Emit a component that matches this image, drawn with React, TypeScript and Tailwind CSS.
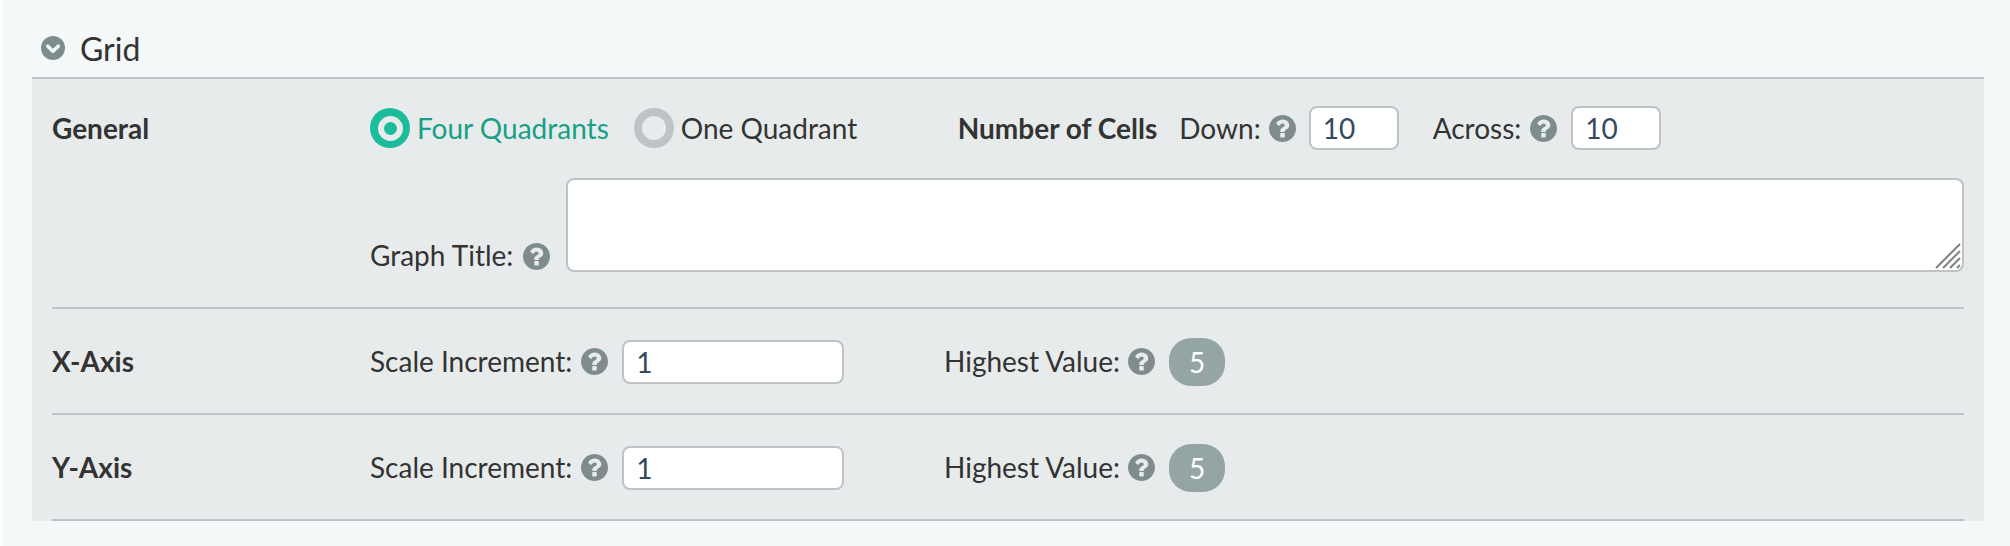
function Help() {
  return (
    <svg className="w-[27px] h-[27px] shrink-0 text-[#7f8c8d]" viewBox="128 128 1536 1536" fill="currentColor">
      <path d="M1024 1376v-192q0-14-9-23t-23-9h-192q-14 0-23 9t-9 23v192q0 14 9 23t23 9h192q14 0 23-9t9-23zm256-672q0-88-55.5-163t-138.5-116-170-41q-243 0-371 213-15 24 8 42l132 100q7 6 19 6 16 0 25-12 53-68 86-92 34-24 86-24 48 0 85.5 26t37.5 59q0 38-20 61t-68 45q-63 28-115.5 86.5t-52.5 125.5v36q0 14 9 23t23 9h192q14 0 23-9t9-23q0-19 21.5-49.5t54.5-49.5q32-18 49-28.5t46-35 44.5-48 28-60.5 12.5-81zm384 192q0 209-103 385.5t-279.5 279.5-385.5 103-385.5-103-279.5-279.5-103-385.5 103-385.5 279.5-279.5 385.5-103 385.5 103 279.5 279.5 103 385.5z" />
    </svg>
  );
}

function ChevronCircle() {
  return (
    <svg className="ml-[9px] w-[24px] h-[24px]" viewBox="0 0 24 24" fill="none">
      <circle cx="12" cy="12" r="12" fill="#7f8c8d" />
      <path d="M6.8 10.2 L12 15.2 L17.2 10.2" stroke="#f4f8f9" strokeWidth="3.6" strokeLinecap="round" strokeLinejoin="round" />
    </svg>
  );
}

function NumberInput({ value, width }: { value: string; width: string }) {
  return (
    <input
      type="text"
      defaultValue={value}
      className={`${width} h-[44px] rounded-[8px] border-2 border-[#bdc3c7] bg-white px-[12px] text-[28px] text-[#34495e] outline-none`}
    />
  );
}

function AxisRow({ label }: { label: string }) {
  return (
    <div className="flex items-center h-[106px] pt-[1px] border-b-2 border-[#bdc3c7]">
      <div className="w-[318px] mb-[2px] font-bold">{label}</div>
      <div className="flex items-center w-[574px]">
        <span className="mb-[2px]">Scale Increment:</span>
        <span className="ml-[9px] mr-[14px]"><Help /></span>
        <NumberInput value="1" width="w-[222px]" />
      </div>
      <div className="flex items-center">
        <span className="mb-[2px]">Highest Value:</span>
        <span className="ml-[8px] mr-[14px]"><Help /></span>
        <span className="flex items-center justify-center w-[56px] h-[48px] rounded-[22px] bg-[#95a5a6] text-white">5</span>
      </div>
    </div>
  );
}

export default function App() {
  return (
    <div className="h-[546px] bg-white pl-[2px] font-[Lato,sans-serif] text-[28px] leading-[36px] text-[#333333]">
      <div className="h-full bg-[#f4f8f9] pl-[30px] pr-[26px]">
        <div className="flex items-center h-[79px] pt-[19px] border-b-2 border-[#bdc3c7]">
          <ChevronCircle />
          <span className="ml-[15px] mt-[1px] text-[32px]">Grid</span>
        </div>

        <div className="h-[442px] bg-[#e8ebec] px-[20px]">
          <div className="pt-[29px] pb-[35px] border-b-2 border-[#bdc3c7]">
            <div className="flex">
              <div className="w-[318px] font-bold leading-[40px]">General</div>
              <div className="flex-1">
                <div className="flex items-center h-[40px]">
                  <span className="flex items-center justify-center w-[40px] h-[40px] rounded-full bg-[#1abc9c]">
                    <span className="flex items-center justify-center w-[25px] h-[25px] rounded-full bg-[#e8ebec]">
                      <span className="w-[13px] h-[13px] rounded-full bg-[#1abc9c]" />
                    </span>
                  </span>
                  <span className="ml-[7px] text-[#16a085]">Four Quadrants</span>
                  <span className="ml-[25px] w-[40px] h-[40px] rounded-full border-[8px] border-[#bdc3c7] bg-[#e8ebec]" />
                  <span className="ml-[7px] w-[277px]">One Quadrant</span>
                  <span className="font-bold">Number of Cells</span>
                  <span className="ml-[22px]">Down:</span>
                  <span className="ml-[8px] mr-[13px]"><Help /></span>
                  <NumberInput value="10" width="w-[90px]" />
                  <span className="ml-[34px]">Across:</span>
                  <span className="ml-[9px] mr-[14px]"><Help /></span>
                  <NumberInput value="10" width="w-[90px]" />
                </div>
                <div className="flex items-end mt-[30px]">
                  <span className="mb-[-1px]">Graph Title:</span>
                  <span className="ml-[10px] mr-[16px] mb-[2px]"><Help /></span>
                  <div className="relative flex-1 h-[94px]">
                    <textarea className="block w-full h-full resize-none rounded-[8px] border-2 border-[#bdc3c7] bg-white outline-none" />
                    <svg className="absolute right-[3px] bottom-[3px]" width="26" height="26" viewBox="0 0 26 26" stroke="#808080" strokeWidth="2" fill="none">
                      <path d="M1 25 L25 1" />
                      <path d="M8 25 L25 8" />
                      <path d="M15 25 L25 15" />
                      <path d="M22 25 L25 22" />
                    </svg>
                  </div>
                </div>
              </div>
            </div>
          </div>
          <AxisRow label="X-Axis" />
          <AxisRow label="Y-Axis" />
        </div>
      </div>
    </div>
  );
}
